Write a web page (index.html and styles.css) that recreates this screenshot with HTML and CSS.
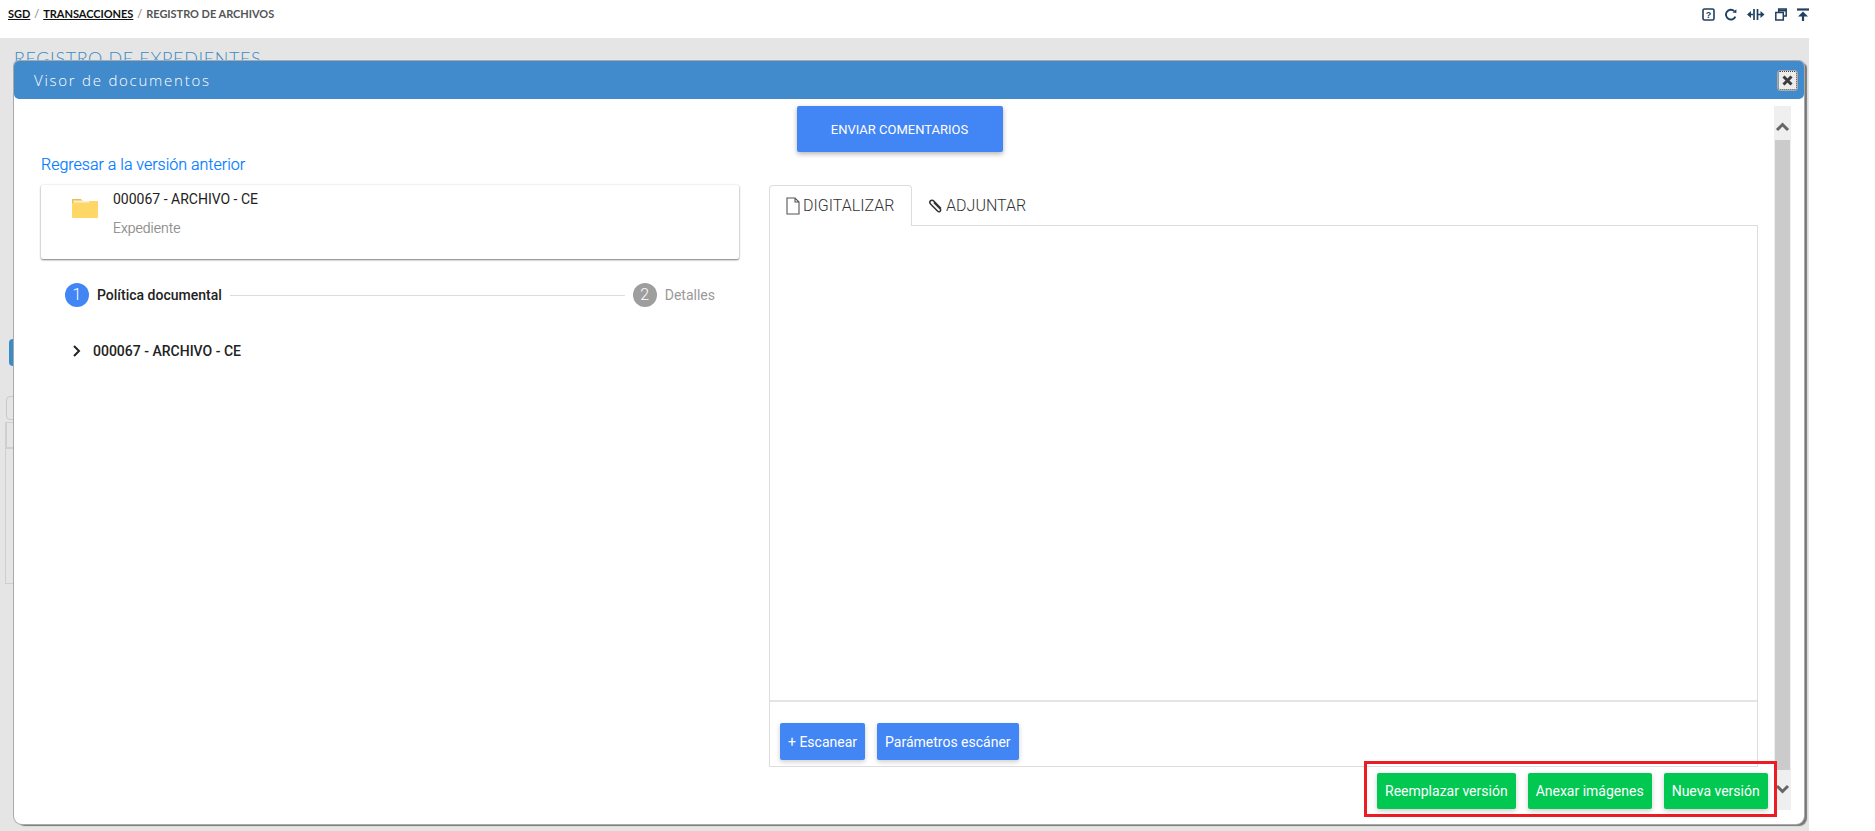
FILE: index.html
```html
<!DOCTYPE html>
<html lang="es">

<head>
    <meta charset="UTF-8">
    <title>Registro de archivos</title>
    <link rel="stylesheet" href="styles.css">
</head>

<body>
    <header class="topbar">
        <nav class="breadcrumb">
            <a href="#">SGD</a><span class="sep">/</span><a href="#">TRANSACCIONES</a><span class="sep">/</span><span>REGISTRO DE ARCHIVOS</span>
        </nav>
        <div class="top-icons">
            <svg width="13" height="13" viewBox="0 0 13 13"><rect x="1" y="1" width="11" height="11" rx="1.5" fill="none" stroke="#20405f" stroke-width="1.6"/><text x="6.5" y="10" text-anchor="middle" class="qmark">?</text></svg>
            <svg width="12" height="13" viewBox="0 0 12 13"><path d="M10.4 8.6A4.9 4.9 0 1 1 9.2 3" fill="none" stroke="#20405f" stroke-width="1.9"/><path d="M7.6 4.6L11.4 5V1.2z" fill="#20405f"/></svg>
            <svg width="18" height="13" viewBox="0 0 18 13"><path d="M7 1v11M10.500 1v11" stroke="#20405f" stroke-width="1.700"/><path d="M0 6.500L4 3v7zM17.500 6.500L13.500 3v7z" fill="#20405f"/><path d="M3 6.500h3M11 6.500h3" stroke="#20405f" stroke-width="1.600"/></svg>
            <svg width="12" height="13" viewBox="0 0 12 13"><rect x="3.700" y="1" width="7.500" height="7" fill="none" stroke="#20405f" stroke-width="1.500"/><path d="M3.700 2.500h7.500" stroke="#20405f" stroke-width="2"/><rect x="0.800" y="4.500" width="7.500" height="7.500" fill="#fff" stroke="#20405f" stroke-width="1.500"/></svg>
            <svg width="12" height="13" viewBox="0 0 12 13"><path d="M0 1.500h12" stroke="#20405f" stroke-width="2.200"/><path d="M6 3.500L1 8.500h10z" fill="#20405f"/><path d="M6 7v6" stroke="#20405f" stroke-width="2.200"/></svg>
        </div>
    </header>

    <main class="page">
        <h1 class="page-title">REGISTRO DE EXPEDIENTES</h1>
        <div class="bg-tab"></div>
        <div class="bg-input"></div>
        <div class="bg-table">
            <div class="bg-table-head"></div>
        </div>
    </main>

    <section class="modal">
        <div class="modal-head">
            <span>Visor de documentos</span>
            <button class="close-btn" type="button">
                <svg width="11" height="11" viewBox="0 0 11 11"><path d="M1.500 1.500l8 8M9.500 1.500l-8 8" stroke="#3c3c3c" stroke-width="3"/></svg>
            </button>
        </div>

        <div class="modal-body">
            <div class="modal-content">
                <div class="center-row">
                    <button class="btn btn-blue btn-send" type="button">ENVIAR COMENTARIOS</button>
                </div>
                <a class="back-link" href="#">Regresar a la versión anterior</a>

                <div class="columns">
                    <div class="left-col">
                        <div class="file-card">
                            <svg class="folder" width="26" height="20" viewBox="0 0 26 20"><path d="M0 2a1 1 0 0 1 1-1h8l2 2h14a1 1 0 0 1 1 1v15a1 1 0 0 1-1 1H1a1 1 0 0 1-1-1z" fill="#ffd766"/><path d="M2 3h15v1.500H2z" fill="#f3f1e6"/><path d="M0 2a1 1 0 0 1 1-1h8v1H1v3H0z" fill="#eebc4e"/></svg>
                            <div>
                                <div class="file-name">000067 - ARCHIVO - CE</div>
                                <div class="file-type">Expediente</div>
                            </div>
                        </div>

                        <div class="stepper">
                            <span class="step-num active">1</span>
                            <span class="step-label active">Política documental</span>
                            <span class="step-line"></span>
                            <span class="step-num">2</span>
                            <span class="step-label">Detalles</span>
                        </div>

                        <div class="tree-row">
                            <svg width="10" height="14" viewBox="0 0 10 14"><path d="M2 2l5 5-5 5" fill="none" stroke="#222" stroke-width="2"/></svg>
                            <span>000067 - ARCHIVO - CE</span>
                        </div>
                    </div>

                    <div class="right-col">
                        <div class="tabs">
                            <div class="tab active">
                                <svg width="14" height="18" viewBox="0 0 14 18"><path d="M1 1h8l4 4v12H1zM9 1v4h4" fill="none" stroke="#555" stroke-width="1.100"/></svg>
                                DIGITALIZAR
                            </div>
                            <div class="tab">
                                <svg width="15" height="15" viewBox="0 0 15 15"><path d="M13 10.500L6 3.200C4.800 2 3.300 2 2.400 2.900S1.600 5 2.800 6.200L9.500 13c.9.9 2 .9 2.700.2s.6-1.800-.2-2.600L5.800 4.500" fill="none" stroke="#333" stroke-width="1.500"/></svg>
                                ADJUNTAR
                            </div>
                        </div>
                        <div class="tab-panel">
                            <div class="scan-view"></div>
                            <div class="scan-actions">
                                <button class="btn btn-blue" type="button">+ Escanear</button>
                                <button class="btn btn-blue" type="button">Parámetros escáner</button>
                            </div>
                        </div>
                    </div>
                </div>
            </div>

            <div class="scrollbar">
                <svg width="17" height="34" viewBox="0 0 17 34"><path d="M3 24l5.500-5.500L14 24" fill="none" stroke="#666" stroke-width="3"/></svg>
                <div class="scroll-thumb"></div>
                <svg width="17" height="40" viewBox="0 0 17 40"><path d="M3 16l5.500 5.500L14 16" fill="none" stroke="#666" stroke-width="3"/></svg>
            </div>
        </div>

        <div class="highlight">
            <button class="btn btn-green" type="button">Reemplazar versión</button>
            <button class="btn btn-green" type="button">Anexar imágenes</button>
            <button class="btn btn-green" type="button">Nueva versión</button>
        </div>
    </section>
</body>

</html>
```

FILE: styles.css
```css
html,
body {
    height: 100%;
}

body {
    margin: 0;
    width: 1875px;
    height: 831px;
    overflow: hidden;
    background-color: #fff;
    font-family: Roboto, "Liberation Sans", sans-serif;
    display: flex;
    flex-direction: column;
    position: relative;
}

.topbar {
    height: 38px;
    width: 1809px;
    flex-shrink: 0;
    display: flex;
    justify-content: space-between;
    align-items: flex-start;
}

.breadcrumb {
    margin: 7px 0 0 8px;
    font-family: Lato, "Liberation Sans", sans-serif;
    font-size: 11px;
    font-weight: 700;
    letter-spacing: -0.03px;
    line-height: 14px;
    color: #555;
}

.breadcrumb a {
    color: #111;
}

.sep {
    margin: 0 4px;
    font-weight: 400;
    color: #777;
}

.top-icons {
    display: flex;
    align-items: center;
    gap: 10px;
    margin-top: 8px;
}

.top-icons svg {
    display: block;
}

.qmark {
    font-family: "Liberation Sans", sans-serif;
    font-size: 9px;
    font-weight: 700;
    fill: #20405f;
}

.page {
    flex: 1;
    width: 1809px;
    background-color: #e5e5e5;
    overflow: hidden;
    position: relative;
}

.page-title {
    margin: 9px 0 0 14px;
    font-family: Lato, "Liberation Sans", sans-serif;
    font-size: 18px;
    font-weight: 300;
    letter-spacing: 0.6px;
    line-height: 22px;
    color: #3c8ac4;
}

.bg-tab {
    position: absolute;
    left: 9px;
    top: 301px;
    width: 8px;
    height: 27px;
    border-radius: 4px 0 0 4px;
    background-color: #3a8cc8;
}

.bg-input {
    position: absolute;
    left: 6px;
    top: 358px;
    width: 20px;
    height: 22px;
    border: 1px solid #c9c9c9;
    border-radius: 4px;
}

.bg-table {
    position: absolute;
    left: 5px;
    top: 384px;
    width: 20px;
    height: 160px;
    border: 1px solid #cfcfcf;
}

.bg-table-head {
    height: 24px;
    border-bottom: 2px solid #cfcfcf;
    border-left: 1px solid #cfcfcf;
}

.modal {
    position: absolute;
    left: 14px;
    top: 61px;
    width: 1790px;
    height: 763px;
    background-color: #fff;
    border-radius: 5px 5px 8px 8px;
    box-shadow: 0 0 0 1px #a9a9a9, 3px 2px 1px #777;
    display: flex;
    flex-direction: column;
}

.modal-head {
    height: 38px;
    flex-shrink: 0;
    display: flex;
    align-items: center;
    justify-content: space-between;
    padding: 0 7px 0 20px;
    background-color: #418acb;
    border-radius: 5px;
    font-family: "Open Sans", sans-serif;
    font-size: 15px;
    font-weight: 300;
    letter-spacing: 1.75px;
    color: #fff;
}

.close-btn {
    width: 19px;
    height: 19px;
    padding: 0;
    display: flex;
    align-items: center;
    justify-content: center;
    background-color: #ececec;
    border: 1px dotted #444;
    outline: 1px solid #aaa;
    border-radius: 2px;
}

.modal-body {
    flex: 1;
    display: flex;
    min-height: 0;
    padding-right: 13px;
}

.modal-content {
    flex: 1;
    padding: 7px 16px 0 27px;
}

.center-row {
    display: flex;
    justify-content: center;
}

.btn {
    height: 37px;
    padding: 0 8px;
    border: none;
    border-radius: 2px;
    color: #fff;
    font-family: Roboto, sans-serif;
    font-size: 14px;
    box-shadow: 0 2px 5px rgba(0, 0, 0, 0.2);
}

.btn-blue {
    background-color: #4285f4;
}

.btn-green {
    height: 36px;
    background-color: #00c851;
}

.btn-send {
    width: 206px;
    height: 46px;
    font-size: 13px;
    box-shadow: 0 2px 5px rgba(0, 0, 0, 0.3);
}

.back-link {
    display: block;
    margin-top: 1px;
    font-size: 16px;
    line-height: 24px;
    font-weight: 300;
    color: #007bff;
    text-decoration: none;
    -webkit-text-stroke: 0.2px #007bff;
}

.columns {
    display: flex;
    gap: 30px;
    margin-top: 8px;
}

.left-col {
    width: 698px;
    flex-shrink: 0;
}

.file-card {
    height: 74px;
    display: flex;
    padding: 5px 0 0 31px;
    gap: 15px;
    box-sizing: border-box;
    background-color: #fff;
    border-radius: 2px;
    box-shadow: 0 1px 2px rgba(0, 0, 0, 0.5), 0 0 3px rgba(0, 0, 0, 0.08);
}

.folder {
    margin-top: 8px;
}

.file-name {
    font-size: 14px;
    line-height: 18px;
    color: #222;
}

.file-type {
    margin-top: 11px;
    font-size: 14px;
    line-height: 18px;
    color: #888;
    font-weight: 300;
    -webkit-text-stroke: 0.2px #888;
}

.stepper {
    display: flex;
    align-items: center;
    margin: 24px 24px 0 24px;
    height: 24px;
    font-size: 14px;
}

.step-num {
    width: 24px;
    height: 24px;
    flex-shrink: 0;
    border-radius: 50%;
    background-color: #9e9e9e;
    color: #fff;
    font-size: 16px;
    font-weight: 300;
    line-height: 24px;
    text-align: center;
}

.step-num.active {
    background-color: #4285f4;
}

.step-label {
    margin-left: 8px;
    color: #999;
}

.step-label.active {
    color: #222;
    font-weight: 500;
}

.step-line {
    flex: 1;
    height: 1px;
    margin: 0 8px;
    background-color: #ddd;
}

.tree-row {
    display: flex;
    align-items: center;
    gap: 11px;
    margin: 32px 0 0 31px;
    height: 24px;
    font-size: 14px;
    font-weight: 500;
    color: #222;
}

.right-col {
    flex: 1;
    display: flex;
    flex-direction: column;
}

.tabs {
    display: flex;
    height: 41px;
    box-sizing: border-box;
    border-bottom: 1px solid #ddd;
}

.tab {
    height: 41px;
    box-sizing: border-box;
    display: flex;
    align-items: center;
    gap: 3px;
    padding: 0 15px 0 16px;
    font-size: 16px;
    font-weight: 300;
    letter-spacing: 0.03px;
    color: #333;
}

.tab.active {
    width: 143px;
    padding-bottom: 1px;
    background-color: #fff;
    border: 1px solid #ddd;
    border-bottom: none;
    border-radius: 4px 4px 0 0;
}

.tab-panel {
    height: 541px;
    box-sizing: border-box;
    border: 1px solid #ddd;
    border-top: none;
    display: flex;
    flex-direction: column;
}

.scan-view {
    height: 474px;
    border-bottom: 2px solid #e4e4e4;
}

.scan-actions {
    display: flex;
    gap: 12px;
    padding: 21px 10px 0;
}

.scrollbar {
    width: 17px;
    height: 704px;
    margin-top: 7px;
    flex-shrink: 0;
    display: flex;
    flex-direction: column;
    align-items: center;
    background-color: #efefef;
}

.scrollbar svg {
    display: block;
    flex-shrink: 0;
}

.scroll-thumb {
    width: 15px;
    flex: 1;
    background-color: #cbcbcb;
}

.highlight {
    position: absolute;
    left: 1350px;
    top: 700px;
    width: 413px;
    height: 56px;
    box-sizing: border-box;
    border: 3px solid #ed1c24;
    display: flex;
    gap: 12px;
    padding: 9px 0 0 10px;
}
```
